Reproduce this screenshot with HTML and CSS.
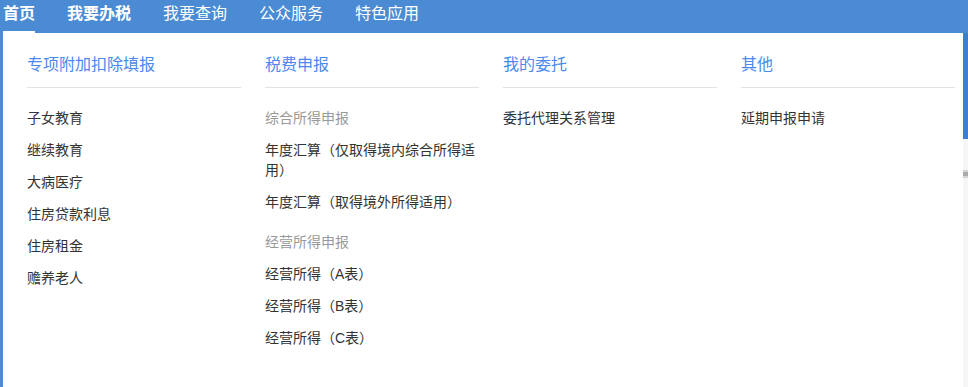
FILE: index.html
```html
<!DOCTYPE html>
<html lang="zh-CN">
<head>
    <meta charset="UTF-8">
    <title>我要办税</title>
    <link rel="stylesheet" href="styles.css">
</head>
<body>
<!-- 顶部导航 -->
<div class="nav">
    <a class="nav-item active">首页</a>
    <a class="nav-item strong">我要办税</a>
    <a class="nav-item">我要查询</a>
    <a class="nav-item">公众服务</a>
    <a class="nav-item">特色应用</a>
</div>

<div class="main">
    <!-- 下拉菜单 -->
    <div class="panel">
        <div class="col">
            <h3 class="col-title">专项附加扣除填报</h3>
            <ul class="menu">
                <li>子女教育</li>
                <li>继续教育</li>
                <li>大病医疗</li>
                <li>住房贷款利息</li>
                <li>住房租金</li>
                <li>赡养老人</li>
            </ul>
        </div>
        <div class="col">
            <h3 class="col-title">税费申报</h3>
            <ul class="menu">
                <li class="group">综合所得申报</li>
                <li>年度汇算（仅取得境内综合所得适用）</li>
                <li>年度汇算（取得境外所得适用）</li>
                <li class="group gap">经营所得申报</li>
                <li>经营所得（A表）</li>
                <li>经营所得（B表）</li>
                <li>经营所得（C表）</li>
            </ul>
        </div>
        <div class="col">
            <h3 class="col-title">我的委托</h3>
            <ul class="menu">
                <li>委托代理关系管理</li>
            </ul>
        </div>
        <div class="col">
            <h3 class="col-title">其他</h3>
            <ul class="menu">
                <li>延期申报申请</li>
            </ul>
        </div>
    </div>

    <!-- 右侧边缘 -->
    <div class="side">
        <div class="side-top"></div>
        <div class="side-bar"></div>
    </div>
</div>
</body>
</html>
```

FILE: styles.css
```css
* {
    box-sizing: border-box;
}

body {
    margin: 0;
    width: 968px;
    height: 387px;
    overflow: hidden;
    font-family: "Liberation Sans", "Noto Sans CJK SC", sans-serif;
    background: #fff;
}

/* 顶部导航 */
.nav {
    display: flex;
    gap: 32px;
    height: 33px;
    padding-left: 3px;
    background-color: #4a8bd4;
}

.nav-item {
    height: 33px;
    line-height: 27px;
    font-size: 16px;
    color: #fff;
    cursor: pointer;
}

.nav-item.active,
.nav-item.strong {
    font-weight: bold;
}

.nav-item.active {
    border-bottom: 2px solid #fff;
}

/* 下拉菜单 */
.main {
    display: flex;
    height: 354px;
}

.panel {
    flex: 1;
    display: grid;
    grid-template-columns: repeat(4, 214px);
    column-gap: 24px;
    align-items: start;
    padding: 20px 0 0 24px;
    border-left: 3px solid #4a8bd4;
    background: #fff;
}

.col-title {
    margin: 0;
    padding-bottom: 10px;
    border-bottom: 1px solid #e3e3e3;
    font-size: 16px;
    line-height: 24px;
    font-weight: normal;
    color: #4b89ee;
}

.menu {
    list-style: none;
    margin: 0;
    padding: 8px 0 0;
}

.menu li {
    margin-top: 12px;
    font-size: 14px;
    line-height: 20px;
    color: #333;
    cursor: pointer;
}

.menu li.group {
    color: #999;
    cursor: default;
}

.menu li.gap {
    margin-top: 20px;
}

/* 右侧边缘 */
.side {
    width: 5px;
    background: #f6f6f6;
}

.side-top {
    height: 106px;
    background: #3c7fd2;
}

.side-bar {
    height: 8px;
    margin-top: 31px;
    border-top: 2px solid #d4d4d4;
    border-bottom: 2px solid #d4d4d4;
    background: #ababab;
}
```
